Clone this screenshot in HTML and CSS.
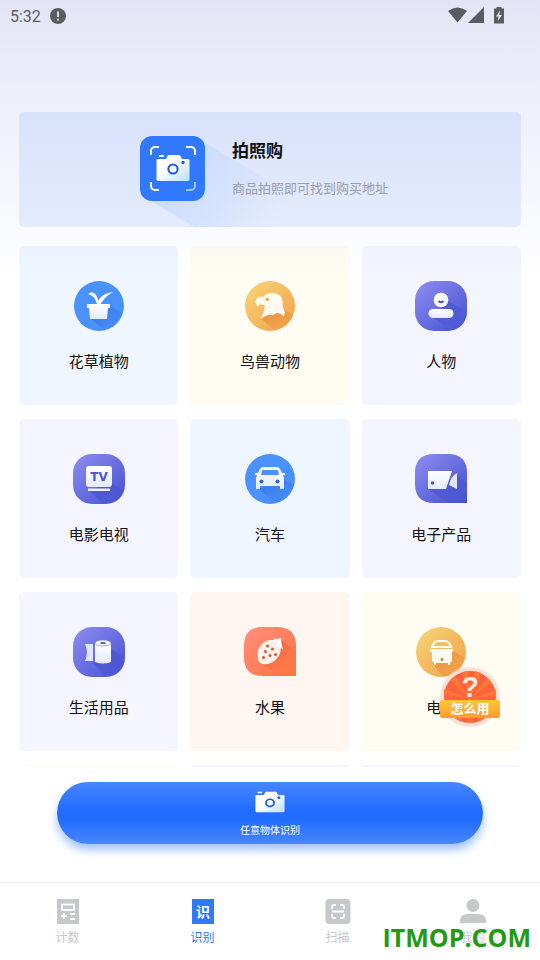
FILE: index.html
```html
<!DOCTYPE html>
<html lang="zh-CN">
  <head>
    <meta charset="utf-8" />
    <meta name="viewport" content="width=device-width, initial-scale=1" />
    <title>识别</title>
    <link rel="stylesheet" href="styles.css" />
  </head>
  <body>
    <!-- shared gradients and shapes -->
    <svg class="defs" width="0" height="0" aria-hidden="true">
      <defs>
        <linearGradient id="blue" x1="0" y1="0" x2="1" y2="1">
          <stop offset="0.4" stop-color="#4a93ff" />
          <stop offset="1" stop-color="#478ffb" />
        </linearGradient>
        <linearGradient id="gold" x1="0" y1="0" x2="1" y2="1">
          <stop offset="0" stop-color="#f7d578" />
          <stop offset="1" stop-color="#f1a047" />
        </linearGradient>
        <linearGradient id="violet" x1="0" y1="0" x2="1" y2="1">
          <stop offset="0" stop-color="#8f8df0" />
          <stop offset="1" stop-color="#4350d2" />
        </linearGradient>
        <linearGradient id="red" x1="0" y1="0" x2="1" y2="1">
          <stop offset="0" stop-color="#ff8d7c" />
          <stop offset="1" stop-color="#ff7540" />
        </linearGradient>
        <linearGradient id="white" x1="0" y1="0" x2="0" y2="1">
          <stop offset="0" stop-color="#ffffff" />
          <stop offset="1" stop-color="#e4ebff" />
        </linearGradient>
        <linearGradient id="lens" x1="0" y1="0" x2="1" y2="1">
          <stop offset="0.4" stop-color="#ffffff" />
          <stop offset="1" stop-color="#b9e0ff" />
        </linearGradient>
        <linearGradient id="beam" x1="0" y1="0" x2="1" y2="0.4">
          <stop offset="0.2" stop-color="#c8dcff" />
          <stop offset="1" stop-color="#c8dcff" stop-opacity="0" />
        </linearGradient>
        <linearGradient id="blueShade" x1="0" y1="0" x2="1" y2="1">
          <stop offset="0.2" stop-color="#2f6bdc" stop-opacity="0.6" />
          <stop offset="0.9" stop-color="#2f6bdc" stop-opacity="0" />
        </linearGradient>
        <linearGradient id="goldShade" x1="0" y1="0" x2="1" y2="1">
          <stop offset="0.2" stop-color="#e8792c" stop-opacity="0.6" />
          <stop offset="0.9" stop-color="#ee8537" stop-opacity="0.1" />
        </linearGradient>
        <linearGradient id="violetShade" x1="0" y1="0" x2="1" y2="1">
          <stop offset="0.2" stop-color="#3341bd" stop-opacity="0.5" />
          <stop offset="0.9" stop-color="#3341bd" stop-opacity="0" />
        </linearGradient>
        <linearGradient id="redShade" x1="0" y1="0" x2="1" y2="1">
          <stop offset="0.2" stop-color="#e8431a" stop-opacity="0.6" />
          <stop offset="0.9" stop-color="#ff7540" stop-opacity="0" />
        </linearGradient>
        <symbol id="camera" viewBox="0 0 34 28">
          <path fill="url(#lens)" d="M3 1h5v2H3zM2 5h8l2-4h12l2 4h6q1.500 0 1.500 1.500v19q0 1.500-1.500 1.500H2q-1.500 0-1.500-1.500v-19Q.5 5 2 5z" />
          <circle cx="17" cy="15" r="4.600" fill="none" stroke="#2058d8" stroke-width="2" />
          <circle cx="27" cy="8.500" r="1.700" fill="#2058d8" />
        </symbol>
      </defs>
    </svg>

    <div class="app">
      <header class="status">
        <span class="time">5:32</span>
        <svg class="alert" width="16" height="16" viewBox="0 0 16 16">
          <circle cx="8" cy="8" r="8" fill="#5b5c62" />
          <path d="M8 3.500v5.500M8 10.700v1.800" stroke="#e5e7f6" stroke-width="1.800" />
        </svg>
        <svg width="57" height="18" viewBox="0 0 57 18" fill="#5b5c62">
          <path d="M0 4Q9.500-3 19 4L9.500 15.500z" />
          <path d="M20 16L36 0v16z" />
          <path d="M48.500 0h5v1.500H56v15H46v-15h2.500z" />
          <path fill="#e8eaf8" d="M52 3.500l-4 6h2.500l-.6 4.500 4-6h-2.500z" />
        </svg>
      </header>

      <main class="content">
        <a class="banner" href="#shop">
          <svg class="banner-icon" width="65" height="65" viewBox="0 0 65 65">
            <path fill="url(#beam)" d="M60 4L155 60V110H87L4 61z" />
            <rect width="65" height="65" rx="12" fill="#3178fc" />
            <path d="M11 19v-4a4 4 0 0 1 4-4h4M46 11h5a4 4 0 0 1 4 4v4M11 46v4a4 4 0 0 0 4 4h4" fill="none" stroke="#fff" stroke-width="2" />
            <path d="M46 54h5a4 4 0 0 0 4-4v-4" fill="none" stroke="#93cbff" stroke-width="2" />
            <use href="#camera" x="16" y="18" width="34" height="28" />
          </svg>
          <span class="banner-text">
            <strong>拍照购</strong>
            <span>商品拍照即可找到购买地址</span>
          </span>
        </a>

        <div class="grid">
          <a class="tile tile-blue" href="#plant">
            <svg class="icon" viewBox="0 0 52 50">
              <circle cx="26" cy="25" r="25" fill="url(#blue)" />
              <path d="M36 24l13 8Q45 47 31 49L17 37z" fill="url(#blueShade)" />
              <path d="M14 23h23v4h-2l-1 11H17l-1-11h-2z" fill="url(#white)" />
              <path d="M24 24c-1-6-3-9-9-11 3-3 9-2 10 7 3-5 7-8 15-9-6 3-9 7-13 13z" fill="#fff" />
            </svg>
            <span>花草植物</span>
          </a>
          <a class="tile tile-cream" href="#animal">
            <svg class="icon" viewBox="0 0 52 50">
              <circle cx="26" cy="25" r="25" fill="url(#gold)" />
              <path d="M39 28l10 6Q44 46 31 49L17 38z" fill="url(#goldShade)" />
              <path d="M13.300 17C16 15 18 16 20 15.500 22 13 24 12.300 26 12.300 30 12 33 12 35 14 38 16 39 18 38.700 25.700L41 31.500 40 35.200 36 32.500 32.700 32 28.700 34.300 24.700 33.500 20 35.500 17.500 37.700 17 36.500C19 33 20.500 30 20.700 24.300L17 23.500 15.300 23.700 14 25.500C11.500 23 10.500 20 13.300 17z" fill="#fffaf0" />
              <circle cx="23.300" cy="18.300" r="1.600" fill="#eda642" />
            </svg>
            <span>鸟兽动物</span>
          </a>
          <a class="tile tile-violet" href="#person">
            <svg class="icon" viewBox="0 0 52 50">
              <rect width="52" height="50" rx="19" fill="url(#violet)" />
              <path d="M33 20l16 9Q46 42 31 45L17 36z" fill="url(#violetShade)" />
              <circle cx="26" cy="19" r="7.300" fill="#fff" />
              <path d="M23.500 20q2.500 2.500 5 0" fill="none" stroke="#4653cf" stroke-width="1.900" />
              <rect x="13.500" y="28" width="25" height="9" rx="4.500" fill="url(#white)" />
            </svg>
            <span>人物</span>
          </a>

          <a class="tile tile-violet" href="#movie">
            <svg class="icon" viewBox="0 0 52 50">
              <rect width="52" height="50" rx="19" fill="url(#violet)" />
              <path d="M38 29l12 7Q44 47 30 49L16 37z" fill="url(#violetShade)" />
              <rect x="13" y="12" width="26" height="21" rx="3" fill="url(#white)" />
              <text class="tv" x="26" y="27" text-anchor="middle" fill="#4c55cf">TV</text>
              <path d="M15 34.500h22v2.500H15z" fill="#f1f3ff" />
            </svg>
            <span>电影电视</span>
          </a>
          <a class="tile tile-blue" href="#car">
            <svg class="icon" viewBox="0 0 52 50">
              <circle cx="26" cy="25" r="25" fill="url(#blue)" />
              <path d="M38 24l12 7Q44 48 30 49L15 35z" fill="url(#blueShade)" />
              <path fill="url(#white)" fill-rule="evenodd" d="M18 13h16l2 2 2 4h3v2h-2l1 3v11h-4v-3H16v3h-4V24l1-3h-2v-2h3l2-4zm0 3l-1 5h18l-1-5z" />
              <circle cx="17.500" cy="27.500" r="2" fill="#3268cb" />
              <circle cx="33.500" cy="27.500" r="2" fill="#3268cb" />
            </svg>
            <span>汽车</span>
          </a>
          <a class="tile tile-violet" href="#digital">
            <svg class="icon" viewBox="0 0 52 50">
              <path d="M19 0h14q19 0 19 19v30H19Q0 49 0 30V19Q0 0 19 0z" fill="url(#violet)" />
              <path d="M42 22l10 6v21H33L13 35z" fill="url(#violetShade)" />
              <path d="M13 17h24l-6 18H13z" fill="url(#white)" />
              <path d="M34 31q2-9 8-12v16z" fill="#e5e8ff" />
              <circle cx="17.500" cy="29" r="1.800" fill="#4852cd" />
            </svg>
            <span>电子产品</span>
          </a>

          <a class="tile tile-violet" href="#daily">
            <svg class="icon" viewBox="0 0 52 50">
              <rect width="52" height="50" rx="19" fill="url(#violet)" />
              <path d="M38 22l13 8Q46 46 33 49L20 36z" fill="url(#violetShade)" />
              <path d="M12 17h8v17h-8q4-9 0-17z" fill="#dfe4ff" />
              <path d="M22 16h16v19q-8 3-16 0z" fill="url(#white)" />
              <ellipse cx="30" cy="16" rx="8" ry="3" fill="#fff" stroke="#7d82df" stroke-width=".7" />
              <ellipse cx="30" cy="16" rx="3" ry="1" fill="#4b55c4" />
            </svg>
            <span>生活用品</span>
          </a>
          <a class="tile tile-pink" href="#fruit">
            <svg class="icon" viewBox="0 0 52 50">
              <path d="M19 0h14q19 0 19 19v30H19Q0 49 0 30V19Q0 0 19 0z" fill="url(#red)" />
              <path d="M38 14l14 9v26H37L16 36z" fill="url(#redShade)" />
              <path d="M31 14c5 2 7 7 5 12-2 6-7 10-13 11-5 1-9-1-9-6-1-6 0-10 4-14 4-4 9-5 13-3z" fill="#fff0ea" />
              <path d="M26 13l5 0-2-2 4 1 4-1v3l2 9-5-5-2 2-1-5z" fill="#fff" />
              <g fill="#dd5136">
                <circle cx="23.500" cy="19" r="1.500" />
                <circle cx="28.500" cy="22" r="1.500" />
                <circle cx="21.500" cy="24.500" r="1.500" />
                <circle cx="26" cy="28.500" r="1.500" />
                <circle cx="31.500" cy="27.500" r="1.500" />
                <circle cx="19.500" cy="30.500" r="1.500" />
              </g>
            </svg>
            <span>水果</span>
          </a>
          <a class="tile tile-cream" href="#appliance">
            <svg class="icon" viewBox="0 0 52 50">
              <circle cx="26" cy="25" r="25" fill="url(#gold)" />
              <path d="M38 24l12 7Q45 47 29 50L17 36z" fill="url(#goldShade)" />
              <path d="M17 20q2-6 6-6h7q4 0 6 6z" fill="none" stroke="#fff" stroke-width="2" />
              <path d="M15 22h23v3h-1v9l-2 2v2h-2v-2H21v2h-2v-2l-2-2v-9h-2z" fill="#fffaf0" />
              <circle cx="27" cy="32.500" r="1.400" fill="#d88034" />
            </svg>
            <span>电器</span>
          </a>

          <a class="tile tile-cream" href="#food"></a>
          <a class="tile tile-blue" href="#logo"></a>
          <a class="tile tile-violet" href="#more"></a>
        </div>
      </main>

      <div class="action">
        <button class="scan" type="button">
          <svg width="30" height="22" viewBox="0 0 34 28" preserveAspectRatio="none">
            <use href="#camera" width="34" height="28" />
          </svg>
          <span>任意物体识别</span>
        </button>
      </div>

      <nav class="tabs">
        <a class="tab" href="#count">
          <svg width="26" height="26" viewBox="0 0 26 26">
            <path d="M2 0h22v25H2z" fill="#c6c8cb" />
            <rect x="7" y="5.500" width="12" height="5.500" fill="none" stroke="#fff" stroke-width="1.800" />
            <path d="M6 17h6M9 14v6M15 15h5M15 20h5" stroke="#fff" stroke-width="2" />
          </svg>
          <span>计数</span>
        </a>
        <a class="tab active" href="#detect">
          <svg width="26" height="26" viewBox="0 0 26 26">
            <path d="M2 0h22v25H2z" fill="#3178fc" />
            <text class="tab-glyph" x="13" y="18" text-anchor="middle" fill="#fff">识</text>
          </svg>
          <span>识别</span>
        </a>
        <a class="tab" href="#scan">
          <svg width="26" height="26" viewBox="0 0 26 26">
            <rect x=".5" width="25" height="25" rx="4" fill="#c6c8cb" />
            <path d="M7 10V8q0-2 2-2h2M15 6h2q2 0 2 2v2M7 15v2q0 2 2 2h2M15 19h2q2 0 2-2v-2M7 12.500h12" fill="none" stroke="#fff" stroke-width="1.800" />
          </svg>
          <span>扫描</span>
        </a>
        <a class="tab" href="#mine">
          <svg width="26" height="26" viewBox="0 0 26 26">
            <circle cx="13" cy="6.500" r="6.500" fill="#c6c8cb" />
            <path d="M0 24v-2q0-7 8-7h10q8 0 8 7v2z" fill="#c6c8cb" />
          </svg>
          <span>我的</span>
        </a>
      </nav>

      <button class="help" type="button">
        <svg width="60" height="60" viewBox="0 0 60 60" aria-hidden="true">
          <circle cx="30" cy="30" r="30" fill="#fddfd3" />
          <circle cx="30" cy="30" r="26" fill="#ff603d" />
          <path d="M30 32L4 27v-5zM30 32L10 13l5-4zM30 32L22 5l6-1zM30 32L35 4l6 2zM30 32L47 11l4 4zM30 32L56 23v5zM30 32L20 54l-5-3zM30 32L27 56h6zM30 32L40 54l5-3z" fill="#ff7935" />
          <text class="question" x="30" y="30" text-anchor="middle" fill="#ffe9dd">?</text>
        </svg>
        <span>怎么用</span>
      </button>
      <div class="watermark">ITMOP.COM</div>
    </div>
  </body>
</html>
```
FILE: styles.css
```css
* {
  box-sizing: border-box;
}

body {
  margin: 0;
  font-family: Roboto, "Noto Sans CJK SC", sans-serif;
  color: #111;
}

a {
  color: inherit;
  text-decoration: none;
}

button {
  border: 0;
  padding: 0;
  font-family: inherit;
  cursor: pointer;
}

svg {
  display: block;
  flex-shrink: 0;
}

.defs {
  position: absolute;
}

.app {
  position: relative;
  display: flex;
  flex-direction: column;
  height: 100vh;
  overflow: hidden;
  background: linear-gradient(#e3e5f6, #eceefa 90px, #fff 280px);
}

.status {
  display: flex;
  align-items: center;
  height: 32px;
  padding: 0 35px 0 10px;
  color: #5b5c62;
}

.time {
  font-size: 16px;
}

.alert {
  margin: 0 auto 0 9px;
}

.content {
  flex: 1;
  min-height: 0;
  padding: 80px 19px 0;
  overflow: hidden;
}

/* banner */
.banner {
  display: flex;
  align-items: center;
  justify-content: center;
  gap: 27px;
  height: 115px;
  padding: 0 12px 2px 0;
  border-radius: 5px;
  background: linear-gradient(#d9e2fb, #e4ebfd);
  overflow: hidden;
}

.banner-icon {
  overflow: visible;
}

.banner-text {
  display: flex;
  flex-direction: column;
  gap: 16px;
  z-index: 1;
  font-size: 13px;
  line-height: 20px;
  color: #9a9eae;
}

.banner-text strong {
  font-size: 17px;
  line-height: 24px;
  color: #111;
}

/* category tiles */
.grid {
  display: grid;
  grid-template-columns: repeat(3, 1fr);
  grid-auto-rows: 159px;
  gap: 14px 12px;
  margin-top: 19px;
}

.tile {
  display: flex;
  flex-direction: column;
  align-items: center;
  gap: 20px;
  padding-top: 35px;
  border-radius: 5px;
  font-size: 15px;
  line-height: 22px;
}

.tile-blue {
  background: rgba(51, 140, 255, 0.08);
}

.tile-cream {
  background: rgba(255, 200, 50, 0.06);
}

.tile-violet {
  background: rgba(55, 55, 255, 0.05);
}

.tile-pink {
  background: rgba(255, 80, 20, 0.06);
}

.icon {
  width: 52px;
  height: 50px;
}

.tv {
  font: bold 12px "DejaVu Sans", sans-serif;
}

/* main button */
.action {
  padding: 15px 57px 38px;
  background: #fff;
}

.scan {
  display: flex;
  flex-direction: column;
  align-items: center;
  gap: 10px;
  width: 100%;
  height: 62px;
  padding-top: 9px;
  border-radius: 31px;
  font-size: 10px;
  line-height: 16px;
  color: #fff;
  background: linear-gradient(#4786ff, #226dff 45%, #226dff 60%, #4786ff);
  box-shadow: 0 6px 10px rgba(49, 120, 252, 0.45);
}

/* bottom tabs */
.tabs {
  display: grid;
  grid-template-columns: repeat(4, 1fr);
  height: 78px;
  border-top: 1px solid #e9e9eb;
  background: #fff;
}

.tab {
  display: flex;
  flex-direction: column;
  align-items: center;
  gap: 4px;
  padding-top: 16px;
  font-size: 12px;
  line-height: 18px;
  color: #c6c8cb;
}

.tab.active {
  color: #3178fc;
}

.tab-glyph {
  font: bold 14px "Noto Sans CJK SC", sans-serif;
}

/* floating help badge */
.help {
  position: absolute;
  right: 40px;
  bottom: 233px;
  width: 60px;
  height: 60px;
  background: none;
}

.help span {
  position: absolute;
  left: 0;
  top: 33px;
  width: 60px;
  border-radius: 2px;
  font-size: 13px;
  font-weight: bold;
  line-height: 18px;
  color: #fff;
  background: linear-gradient(#ffc633, #ff9a35);
}

.question {
  font: bold 29px "Liberation Sans", sans-serif;
}

.watermark {
  position: absolute;
  right: 9px;
  bottom: 5px;
  font: bold 25px/36px "Open Sans", sans-serif;
  color: #239a14;
}
```
